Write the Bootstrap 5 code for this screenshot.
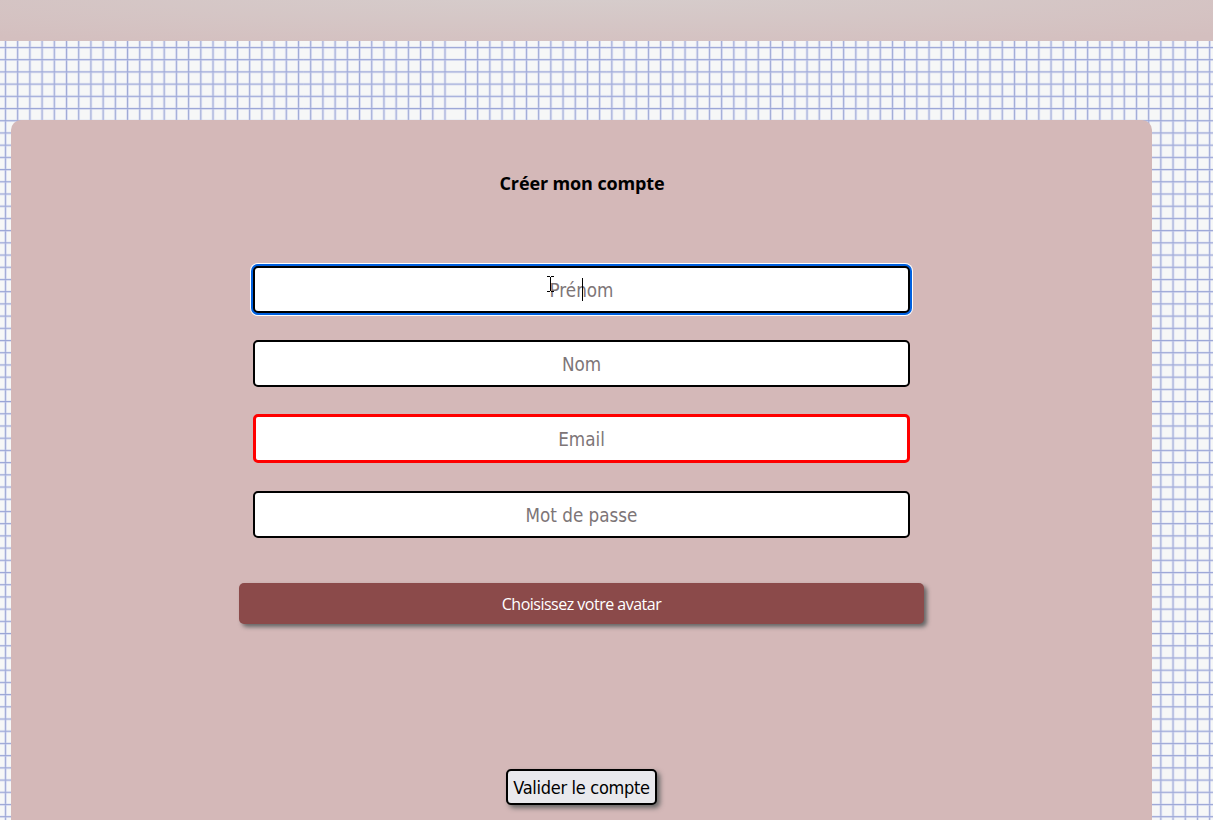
<!DOCTYPE html>
<html lang="fr">
<head>
<meta charset="utf-8">
<meta name="viewport" content="width=device-width, initial-scale=1">
<title>Créer mon compte</title>
<link href="https://cdn.jsdelivr.net/npm/bootstrap@5.3.0/dist/css/bootstrap.min.css" rel="stylesheet">
<style>
body{font-family:"Open Sans","Noto Sans",sans-serif;background:#f6f7f7;height:820px;color:#000}
.paper{position:absolute;inset:0;z-index:-1}
.banner{height:41px;background:radial-gradient(ellipse 900px 60px at 590px -8px,#d6cecd,#d4bfbf)}
.panel{width:1141px;height:700px;margin:79px 0 0 11px;background:#d4b8b8;border-radius:10px 10px 0 0}
.title{font-size:18px;line-height:26px;margin-top:50px;font-weight:700;width:164px;white-space:nowrap;letter-spacing:-.12px}
.fields{width:657px;margin-top:70px}
.field{height:47px;border:2px solid #000;border-radius:5px;padding:2px 0 0;font-family:"DejaVu Sans Condensed","DejaVu Sans",sans-serif;font-stretch:condensed;font-size:18.7px;text-align:center;background:#fff}
.field::placeholder{color:#7d7577;opacity:1}
.field.active{box-shadow:0 0 0 2px #0060df,0 0 0 3px #fff}
.field.wrong{height:49px;border:3px solid red}
.avatar{width:685px;height:41px;margin-top:45px;background:#8b4a4a;color:#fff;border-radius:5px;font-size:16px;letter-spacing:-.5px;box-shadow:3px 3px 4px #666}
.submit{width:151px;height:36px;margin-top:145px;border:2px solid #000;border-radius:5px;background:#e9e9ed;color:#000;font-family:"DejaVu Sans Condensed","DejaVu Sans",sans-serif;font-stretch:condensed;font-size:18px;letter-spacing:-.3px;box-shadow:3px 3px 5px #666;white-space:nowrap}
.caret{position:absolute;left:329px;top:12px;width:1px;height:23px;background:#000}
.pointer{position:absolute;left:294px;top:10px}
</style>
</head>
<body class="m-0 overflow-hidden position-relative">
<svg class="paper" width="1213" height="820" aria-hidden="true">
<defs>
<pattern id="colsA" x="4" y="0" width="12.21" height="820" patternUnits="userSpaceOnUse"><path d="M1.5 0V820" stroke="#c9cff0" stroke-width="2"/><path d="M1.4 0V820" stroke="#99a4d2" stroke-width=".9"/></pattern>
<pattern id="colsB" x="464" y="0" width="12.2" height="820" patternUnits="userSpaceOnUse"><path d="M1.5 0V820" stroke="#c9cff0" stroke-width="2"/><path d="M1.4 0V820" stroke="#99a4d2" stroke-width=".9"/></pattern>
<pattern id="lines" x="0" y="46" width="1213" height="12.21" patternUnits="userSpaceOnUse"><path d="M0 1.5H1213" stroke="#c3caeb" stroke-width="1.8"/><path d="M0 1.5H1213" stroke="#929ed0" stroke-width=".9"/></pattern>
</defs>
<rect width="452" height="820" fill="url(#colsA)"/><rect x="460" width="753" height="820" fill="url(#colsB)"/><rect width="1213" height="820" fill="url(#lines)"/>
</svg>
<header class="banner"></header>
<main class="panel d-flex flex-column align-items-center">
<h1 class="title mb-0 text-center"><span>Créer mon compte</span></h1>
<form class="d-flex flex-column align-items-center">
<div class="fields d-flex flex-column">
<div class="position-relative"><input class="field active w-100 d-block" placeholder="Prénom" aria-label="Prénom"><i class="caret"></i>
<svg class="pointer" width="7" height="17" viewBox="0 0 7 17" fill="none" stroke="#000" shape-rendering="crispEdges"><path d="M0 .5H3M4 .5H7M0 15.5H3M4 15.5H7M3.5 1V15"/></svg></div>
<input class="field w-100" style="margin-top:27px" placeholder="Nom" aria-label="Nom">
<input class="field wrong w-100" style="margin-top:27px" placeholder="Email" aria-label="Email">
<input class="field w-100" style="margin-top:28px" type="password" placeholder="Mot de passe" aria-label="Mot de passe">
</div>
<button type="button" class="avatar border-0 p-0"><span>Choisissez votre avatar</span></button>
<button type="button" class="submit p-0"><span>Valider le compte</span></button>
</form>
</main>
<script src="https://cdn.jsdelivr.net/npm/bootstrap@5.3.0/dist/js/bootstrap.bundle.min.js"></script>
</body>
</html>
